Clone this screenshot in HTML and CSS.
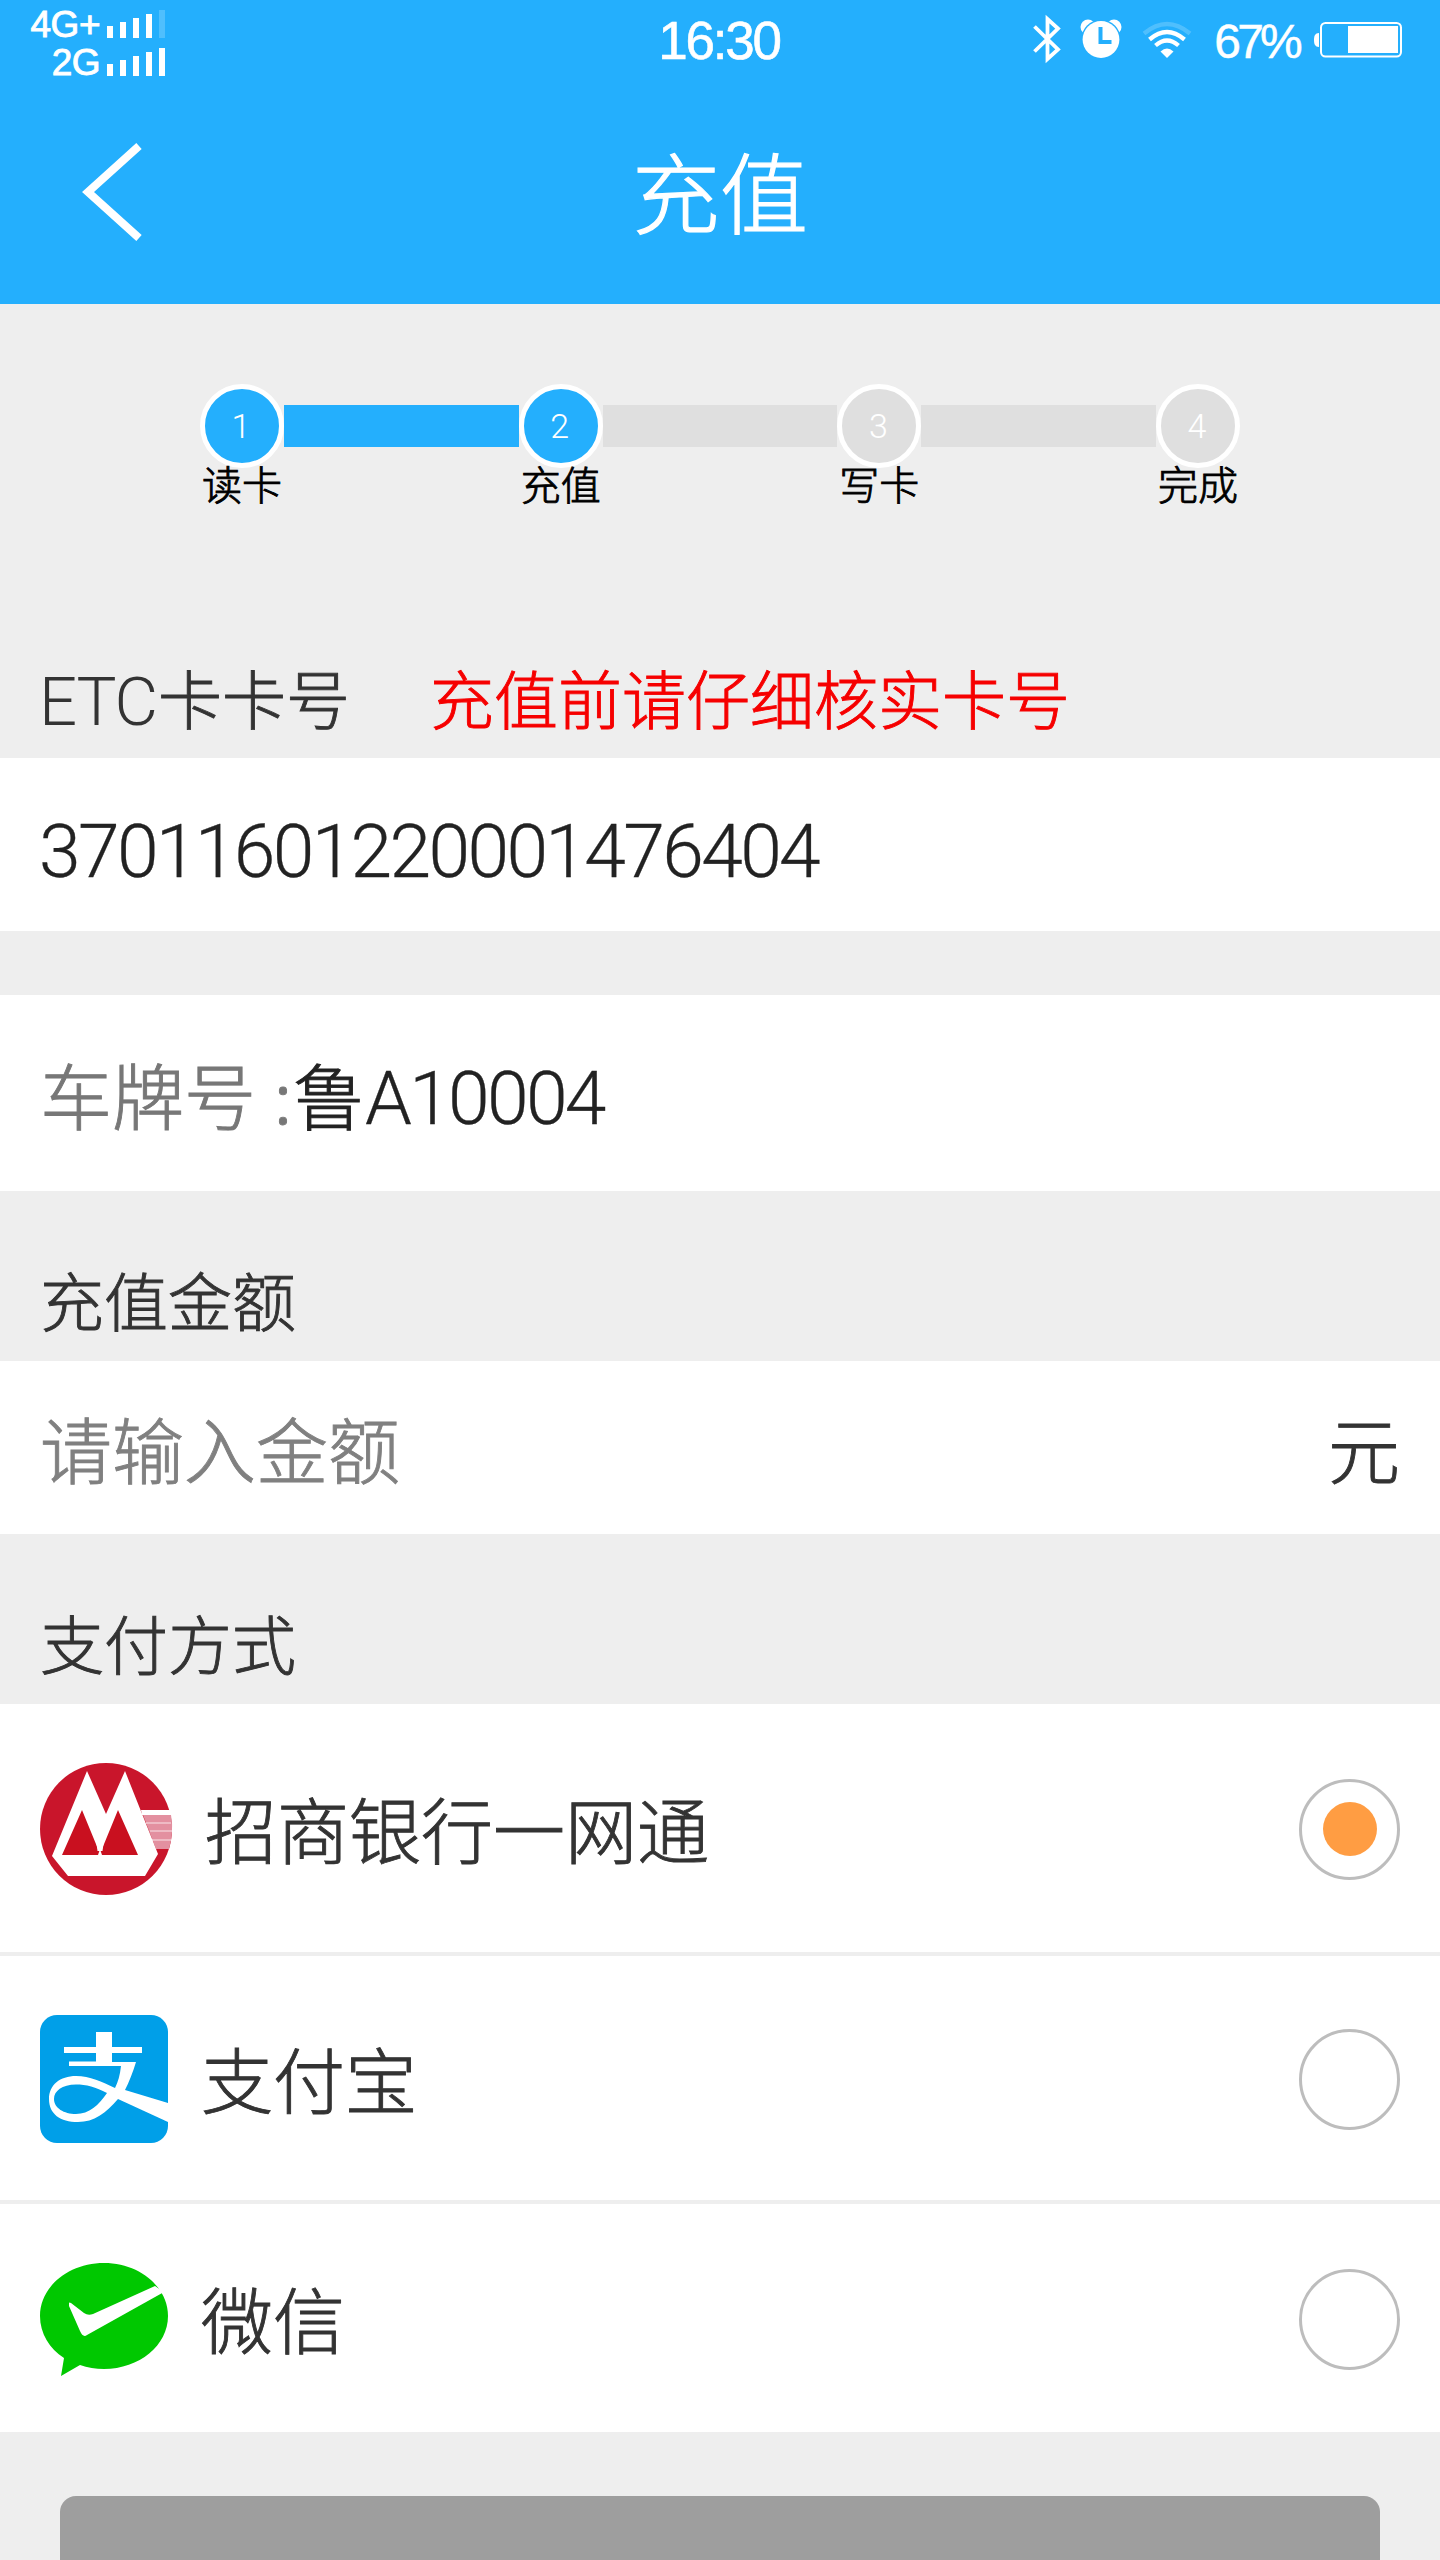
FILE: index.html
```html
<!DOCTYPE html>
<html lang="zh-CN">
<head>
<meta charset="utf-8">
<title>充值</title>
<link rel="stylesheet" href="styles.css">
</head>
<body>
<div class="app">
  <header class="header">
    <div class="status">
      <div class="networks">
        <div class="network"><span>4G+</span>
          <svg width="58" height="28" fill="#fff"><path d="M0 16h6v12H0zM13 12h6v16h-6zM26 8h6v20h-6zM39 4h6v24h-6z"/><path opacity=".2" d="M52 0h6v28h-6z"/></svg>
        </div>
        <div class="network"><span>2G</span>
          <svg width="58" height="28" fill="#fff"><path d="M0 16h6v12H0zM13 12h6v16h-6zM26 8h6v20h-6zM39 4h6v24h-6zM52 0h6v28h-6z"/></svg>
        </div>
      </div>
      <div class="clock">16:30</div>
      <div class="indicators">
        <svg class="bluetooth" width="28" height="50" fill="none" stroke="#fff" stroke-width="3.8"><path d="M1.5 12.500 25 35.500 14.500 45V5L25 14.500 1.500 37.500"/></svg>
        <svg class="alarm" width="42" height="40"><g fill="#fff"><circle cx="8" cy="8" r="7.500"/><circle cx="34" cy="8" r="7.500"/></g><circle cx="21" cy="20.500" r="19.800" fill="#24affd"/><circle cx="21" cy="20.500" r="18.400" fill="#fff"/><path d="M20.500 8v15h11" fill="none" stroke="#24affd" stroke-width="4"/></svg>
        <svg class="wifi" width="50" height="37" fill="none" stroke="#fff" stroke-width="4.300"><path opacity=".2" d="M2 11.500Q25-7.500 48 11.500"/><path d="M7.500 17.500Q25 2.500 42.500 17.500M13.500 23.500Q25 13.500 36.500 23.500"/><path d="M18.500 29.500Q25 23.500 31.500 29.500L25 36Z" fill="#fff" stroke="none"/></svg>
        <span class="percent">67%</span>
        <svg class="battery" width="88" height="36"><path d="M5 11v14C1 25 0 22 0 18s1-7 5-7z" fill="#fff"/><rect x="7" y="1" width="80" height="33.500" rx="4.500" fill="none" stroke="#fff" stroke-width="2"/><path fill="#fff" d="M34 4h50v27H34z"/></svg>
      </div>
    </div>
    <div class="titlebar">
      <svg class="back" width="60" height="98" fill="none" stroke="#fff" stroke-width="8"><path d="M57 3 6 49l51 46"/></svg>
      <h1>充值</h1>
    </div>
  </header>

  <ol class="steps">
    <li class="step done"><b>1</b><span>读卡</span></li>
    <li class="bar done"></li>
    <li class="step done"><b>2</b><span>充值</span></li>
    <li class="bar"></li>
    <li class="step"><b>3</b><span>写卡</span></li>
    <li class="bar"></li>
    <li class="step"><b>4</b><span>完成</span></li>
  </ol>

  <div class="label card-label"><span class="etc">ETC</span>卡卡号<em>充值前请仔细核实卡号</em></div>
  <div class="row card-row"><span class="digits">37011601220001476404</span></div>
  <div class="row plate-row"><span class="muted">车牌号</span><i>:</i><span>鲁<span class="digits">A10004</span></span></div>
  <div class="label">充值金额</div>
  <div class="row amount-row"><span class="hint">请输入金额</span><span class="unit">元</span></div>
  <div class="label">支付方式</div>

  <div class="pay bank">
    <svg class="logo" width="132" height="132">
      <circle cx="66" cy="66" r="66" fill="#c9152b"/>
      <path fill="#fff" d="M101 47h30l1 5h-30z"/>
      <path fill="#e390a0" d="M103 52h28q3 17-2 34h-13z"/>
      <path stroke="#eebac4" stroke-width="2" d="M106 60h25M110 68h22M112 77h19"/>
      <path fill="#fff" d="M47 8 66 51 85 8 118 91 105 113H28L12 93Z"/>
      <path fill="#c9101f" d="M42 47 22 92H58L60 86 62 92H98L78 47 62 86H58Z"/>
      <path fill="#fff" d="M55 70 60 66 65 70 62.500 88H57.500Z"/>
    </svg>
    <span>招商银行一网通</span><div class="radio on"></div>
  </div>
  <div class="pay ali">
    <svg class="logo" width="128" height="128">
      <rect width="128" height="128" rx="17" fill="#009fe8"/>
      <path fill="#fff" fill-rule="evenodd" d="M56 17h16v15h30v6H72v9h24C93 57 89 67 85 75L128 88V107L78 84C66 98 54 107 38 107 20 107 9 99 9 84 9 70 20 61 36 61 50 61 62 67 75 73 78 67 80 60 81 51H29V46.500H56V38H24V32H56ZM67 78C56 72 46 69.500 36 69.500 22 69.500 14 76 14 84 14 93 24 99 36 99 49 99 59 90 67 78Z"/>
    </svg>
    <span>支付宝</span><div class="radio"></div>
  </div>
  <div class="pay wechat">
    <svg class="logo" width="128" height="113">
      <path fill="#00c800" d="M64 0c35.300 0 64 23.700 64 53s-28.700 53-64 53c-8.500 0-16.500-1.500-24-4l-19 11 3-18C9.500 85.500 0 70.500 0 53 0 23.700 28.700 0 64 0z"/>
      <path fill="#fff" d="M29 40q0-1 2 0l13 10q4 3 9 1l62-28 9 6L47 72q-4 3-7-4L29 43z"/>
    </svg>
    <span>微信</span><div class="radio"></div>
  </div>
  <div class="footer"><button class="submit">立即充值</button></div>
</div>
</body>
</html>
```
FILE: styles.css
```css
* { box-sizing: border-box; }
body { margin: 0; background: #eee; }
svg { display: block; flex: none; overflow: visible; }
.app {
  width: 1440px; height: 2560px; overflow: hidden;
  display: flex; flex-direction: column;
  font-family: "Noto Sans CJK SC", sans-serif; font-weight: 300;
  -webkit-text-stroke: 0.9px currentColor;
  color: #333; background: #eee;
}
.app > * { flex: none; }
.header { height: 304px; background: #24affd; color: #fff; }
.status {
  height: 82px; display: grid; grid-template-columns: 1fr auto 1fr;
  font-family: "Liberation Sans", sans-serif; font-weight: 400;
}
.networks { width: 165px; padding-top: 10px; }
.network {
  display: flex; justify-content: flex-end; gap: 7px;
  height: 38px; font-size: 37px; line-height: 30px; letter-spacing: -0.5px;
}
.clock { font-size: 53px; line-height: 82px; letter-spacing: -2.2px; margin-left: -2px; -webkit-text-stroke-width: 0.6px; }
.indicators { display: flex; justify-content: flex-end; align-items: flex-start; padding-right: 38px; }
.bluetooth { margin: 14px 19px 0 0; }
.alarm { margin: 19px 20px 0 0; }
.wifi { margin: 22px 22px 0 0; }
.percent { font-size: 48px; line-height: 84px; letter-spacing: -3.8px; margin-right: 15px; -webkit-text-stroke-width: 0.5px; }
.battery { margin-top: 22px; }
.titlebar { height: 222px; display: grid; grid-template-columns: 1fr auto 1fr; }
.back { margin: 61px 0 0 82px; }
h1 { margin: 0; font-size: 88px; line-height: 214px; font-weight: 300; -webkit-text-stroke-width: 1.2px; }

.steps { list-style: none; margin: 0; padding: 80px 200px 0; height: 334px; display: flex; }
.step { width: 84px; display: flex; flex-direction: column; align-items: center; }
.step b {
  width: 84px; height: 84px; border: 5px solid #fff; border-radius: 50%; background: #dfdfdf;
  color: #fff; font: 300 34px/75px Roboto, sans-serif; text-align: center; padding-right: 2px;
  -webkit-text-stroke-width: 0;
}
.step span { font-size: 40px; line-height: 40px; margin-top: -5px; color: #000; white-space: nowrap; -webkit-text-stroke-width: 0.9px; }
.bar { flex: 1; height: 42px; margin-top: 21px; background: #dfdfdf; }
.step.done b, .bar.done { background: #24affd; }

.label { padding-left: 40px; font-size: 64px; height: 170px; line-height: 215px; white-space: nowrap; }
.card-label { height: 120px; line-height: 117px; display: flex; }
.etc { width: 118px; padding-top: 6px; margin-left: -1px; margin-right: 1px; font-family: Roboto, sans-serif; font-size: 67px; letter-spacing: -1.2px; -webkit-text-stroke-width: 0; }
.label em { margin-left: 80px; font-style: normal; color: #f60000; }
.row { background: #fff; font-size: 72px; padding: 0 40px; display: flex; color: #222; white-space: nowrap; }
.digits { font-family: Roboto, sans-serif; font-size: 75px; letter-spacing: -2.700px; -webkit-text-stroke-width: 0.3px; }
.card-row { height: 173px; line-height: 187px; margin-bottom: 64px; padding-left: 39px; }
.card-row .digits { letter-spacing: -2.65px; }
.plate-row { height: 196px; line-height: 196px; }
.muted { color: #777; }
.plate-row i { width: 37px; padding-left: 18px; font-style: normal; color: #777; }
.amount-row { height: 173px; line-height: 172px; justify-content: space-between; }
.hint { color: #808080; }
.unit { color: #333; }

.pay {
  display: flex; align-items: center; background: #fff; border-bottom: 4px solid #eee;
  padding: 2px 40px 0; font-size: 72px; line-height: 100px;
}
.bank { height: 252px; }
.ali { height: 248px; }
.wechat { height: 228px; border: 0; }
.pay span { flex: 1; margin-left: 33px; padding-bottom: 4px; }
.radio { width: 101px; height: 101px; border: 3px solid #bdbdbd; border-radius: 50%; display: grid; place-items: center; }
.radio.on::after { content: ""; width: 54px; height: 54px; border-radius: 50%; background: #ff9d43; }
.footer { padding: 64px 60px 0; height: 128px; overflow: hidden; }
.submit {
  display: block; width: 100%; height: 192px; border: 0; border-radius: 16px; padding: 0 0 3px;
  background: #9e9e9e; color: #fff; font: 300 72px/184px "Noto Sans CJK SC", sans-serif;
}
```
